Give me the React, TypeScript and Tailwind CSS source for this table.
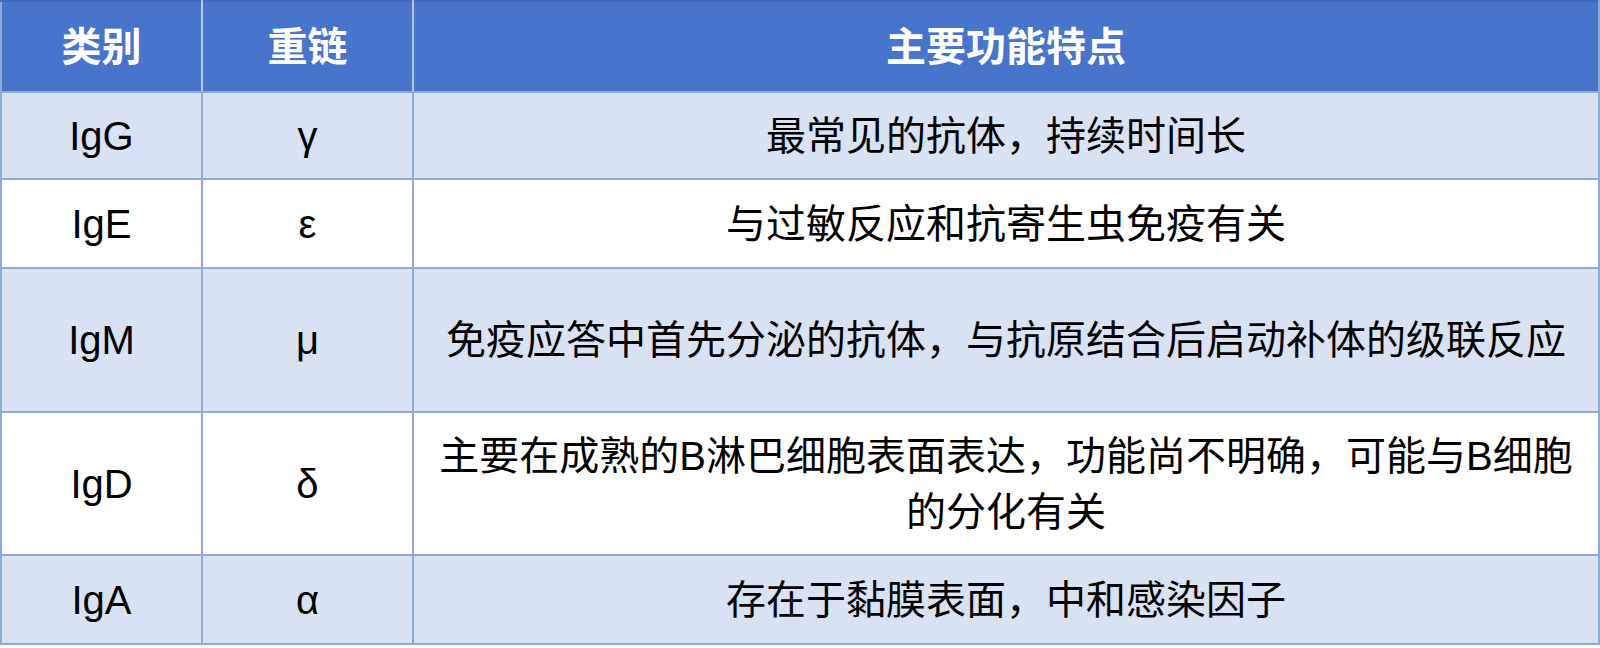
const rows = [
  { cls: "IgG", chain: "γ", desc: "最常见的抗体，持续时间长", h: "h-[87px]", bg: "bg-[#d9e2f3]" },
  { cls: "IgE", chain: "ε", desc: "与过敏反应和抗寄生虫免疫有关", h: "h-[89px]", bg: "bg-white" },
  {
    cls: "IgM",
    chain: "μ",
    desc: "免疫应答中首先分泌的抗体，与抗原结合后启动补体的级联反应",
    h: "h-[144px]",
    bg: "bg-[#d9e2f3]",
  },
  {
    cls: "IgD",
    chain: "δ",
    desc: "主要在成熟的B淋巴细胞表面表达，功能尚不明确，可能与B细胞的分化有关",
    h: "h-[143px]",
    bg: "bg-white",
  },
  { cls: "IgA", chain: "α", desc: "存在于黏膜表面，中和感染因子", h: "h-[89px]", bg: "bg-[#d9e2f3]" },
];

export default function App() {
  return (
    <div className="w-[1600px] h-[648px] bg-white font-['Liberation_Sans','Noto_Sans_CJK_SC',sans-serif] text-[40px] leading-[1.4] text-black">
      <table className="w-[1600px] table-fixed border-collapse">
        <colgroup>
          <col className="w-[201px]" />
          <col className="w-[211px]" />
          <col />
        </colgroup>
        <thead>
          <tr className="bg-[#4775cc] text-white font-bold">
            <th className="h-[91px] border-2 border-[#8eaadb] border-t-[#4268b8] border-r-[#b7c7e6]">类别</th>
            <th className="h-[91px] border-2 border-[#8eaadb] border-t-[#4268b8] border-x-[#b7c7e6]">重链</th>
            <th className="h-[91px] border-2 border-[#8eaadb] border-t-[#4268b8] border-l-[#b7c7e6]">主要功能特点</th>
          </tr>
        </thead>
        <tbody>
          {rows.map((r) => (
            <tr key={r.cls} className={r.bg}>
              <td className={`${r.h} border-2 border-[#8eaadb] text-center`}>{r.cls}</td>
              <td className={`${r.h} border-2 border-[#8eaadb] text-center`}>{r.chain}</td>
              <td className={`${r.h} border-2 border-[#8eaadb] text-center px-4`}>{r.desc}</td>
            </tr>
          ))}
        </tbody>
      </table>
    </div>
  );
}
